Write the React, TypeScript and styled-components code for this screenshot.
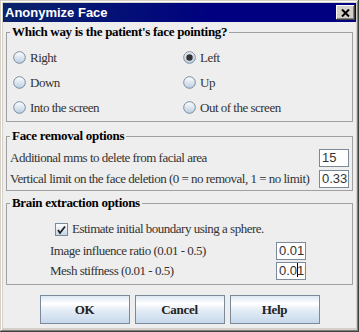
import React from 'react';
import styled, { createGlobalStyle } from 'styled-components';

const GlobalStyle = createGlobalStyle`
  html, body {
    margin: 0;
    padding: 0;
    background: #ffffff;
  }
  body {
    font-family: 'Liberation Serif', 'Times New Roman', serif;
  }
`;

const Frame = styled.div`
  width: 359px;
  height: 332px;
  box-sizing: border-box;
  background: #d4d0c8;
  padding: 3px 3px 4px 3px;
  box-shadow: inset -1px -1px 0 #404040, inset 1px 1px 0 #d4d0c8,
    inset -2px -2px 0 #808080, inset 2px 2px 0 #ffffff;
  display: flex;
  flex-direction: column;
`;

const TitleBar = styled.div`
  height: 19px;
  flex: none;
  background: linear-gradient(to right, #0a246a, #000080 60%);
  display: flex;
  align-items: center;
  justify-content: space-between;
  padding: 0 1px 0 2px;
  color: #ffffff;
  font: bold 13px 'Liberation Sans', Arial, sans-serif;
`;

const CloseButton = styled.div`
  width: 19px;
  height: 15px;
  box-sizing: border-box;
  background: #d4d0c8;
  display: flex;
  align-items: center;
  justify-content: center;
  box-shadow: inset -1px -1px 0 #404040, inset 1px 1px 0 #ffffff,
    inset -2px -2px 0 #808080;
`;

const Content = styled.div`
  flex: 1;
  background: #eeeeee;
  padding: 1px 3px 0 3px;
  color: #333333;
  font-size: 13px;
  letter-spacing: -0.5px;
`;

const Group = styled.fieldset<{ $gap: number }>`
  margin: ${p => p.$gap}px 0 0 0;
  padding: 0 3px 1px 3px;
  border: 1px solid #a0a0a0;
  min-width: 0;
`;

const Legend = styled.legend`
  padding: 0 2px;
  font: bold 13px/16px 'Liberation Serif', 'Times New Roman', serif;
  letter-spacing: -0.3px;
  color: #000000;
`;

const RadioGrid = styled.div`
  display: grid;
  grid-template-columns: 170px 1fr;
  grid-auto-rows: 25px;
  padding: 5px 0 0 3px;
`;

const Choice = styled.label`
  display: flex;
  align-items: center;
  gap: 4px;
  white-space: nowrap;
`;

const Rows = styled.div<{ $top: number }>`
  display: flex;
  flex-direction: column;
  gap: 1px;
  padding-top: ${p => p.$top}px;
`;

const Row = styled.div`
  height: 20px;
  display: flex;
  align-items: center;
  justify-content: space-between;
  white-space: nowrap;
`;

const Field = styled.div`
  width: 30px;
  height: 18px;
  box-sizing: border-box;
  border: 1px solid #7a8a99;
  background: #ffffff;
  padding: 0 0 0 2px;
  overflow: hidden;
  white-space: nowrap;
  font: 13px/16px 'Liberation Sans', Arial, sans-serif;
  letter-spacing: 0;
  color: #333333;
`;

const Caret = styled.span`
  display: inline-block;
  width: 1px;
  height: 14px;
  vertical-align: -2px;
  background: #000000;
  margin-right: -1px;
`;

const CheckRow = styled.label`
  height: 20px;
  margin: 8px 0 2px 45px;
  display: flex;
  align-items: center;
  gap: 4px;
  white-space: nowrap;
`;

const ParamGrid = styled.div`
  width: 256px;
  margin-left: 40px;
  padding-bottom: 2px;
`;

const ParamRow = styled.div`
  height: 20px;
  display: grid;
  grid-template-columns: 1fr 30px;
  align-items: center;
  white-space: nowrap;
`;

const ButtonBar = styled.div`
  display: flex;
  justify-content: center;
  gap: 5px;
  margin-top: 10px;
`;

const Button = styled.button`
  width: 90px;
  height: 29px;
  box-sizing: border-box;
  border: 1px solid #7a8a99;
  border-radius: 0;
  padding: 0;
  background: linear-gradient(to bottom, #dde8f3 0%, #ffffff 28%, #e6eef7 50%, #c6d8eb 100%);
  font: bold 13px 'Liberation Serif', 'Times New Roman', serif;
  letter-spacing: -0.3px;
  color: #222222;
`;

const Radio = ({ on }: { on?: boolean }) => (
  <svg width="13" height="13" viewBox="0 0 13 13">
    <defs>
      <linearGradient id="rg" x1="0" y1="0" x2="0" y2="1">
        <stop offset="0" stopColor="#ffffff" />
        <stop offset="1" stopColor="#b9cde3" />
      </linearGradient>
    </defs>
    <circle cx="6.5" cy="6.5" r="5.8" fill="url(#rg)" stroke="#7a8a99" strokeWidth="1" />
    {on && <circle cx="6.5" cy="6.5" r="4.4" fill="none" stroke="#c8d8ea" strokeWidth="1" />}
    {on && <circle cx="6.5" cy="6.5" r="3.2" fill="#333333" />}
  </svg>
);

const Check = () => (
  <svg width="13" height="13" viewBox="0 0 13 13">
    <defs>
      <linearGradient id="cg" x1="0" y1="0" x2="0" y2="1">
        <stop offset="0" stopColor="#ffffff" />
        <stop offset="1" stopColor="#c3d5e9" />
      </linearGradient>
    </defs>
    <rect x="0.5" y="0.5" width="12" height="12" fill="url(#cg)" stroke="#7a8a99" />
    <path d="M3 7 L5 10 L10 3.5" fill="none" stroke="#222222" strokeWidth="1.8" />
  </svg>
);

const directions = [
  ['Right', 'Left'],
  ['Down', 'Up'],
  ['Into the screen', 'Out of the screen'],
];

const App: React.FC = () => {
  return (
    <>
      <GlobalStyle />
      <Frame>
        <TitleBar>
          <span>Anonymize Face</span>
          <CloseButton>
            <svg width="9" height="8" viewBox="0 0 9 8">
              <path d="M1 0.5 L8 7.5 M8 0.5 L1 7.5" stroke="#000" strokeWidth="2" />
            </svg>
          </CloseButton>
        </TitleBar>
        <Content>
          <Group $gap={1}>
            <Legend>Which way is the patient's face pointing?</Legend>
            <RadioGrid>
              {directions.flat().map(label => (
                <Choice key={label}>
                  <Radio on={label === 'Left'} />
                  {label}
                </Choice>
              ))}
            </RadioGrid>
          </Group>

          <Group $gap={6}>
            <Legend>Face removal options</Legend>
            <Rows $top={4}>
              <Row>
                Additional mms to delete from facial area
                <Field>15</Field>
              </Row>
              <Row>
                Vertical limit on the face deletion (0 = no removal, 1 = no limit)
                <Field>0.33</Field>
              </Row>
            </Rows>
          </Group>

          <Group $gap={4}>
            <Legend>Brain extraction options</Legend>
            <CheckRow>
              <Check />
              Estimate initial boundary using a sphere.
            </CheckRow>
            <ParamGrid>
              <ParamRow>
                Image influence ratio (0.01 - 0.5)
                <Field>0.01</Field>
              </ParamRow>
              <ParamRow>
                Mesh stiffness (0.01 - 0.5)
                <Field>0.0<Caret />15</Field>
              </ParamRow>
            </ParamGrid>
          </Group>

          <ButtonBar>
            <Button>OK</Button>
            <Button>Cancel</Button>
            <Button>Help</Button>
          </ButtonBar>
        </Content>
      </Frame>
    </>
  );
};

export default App;
